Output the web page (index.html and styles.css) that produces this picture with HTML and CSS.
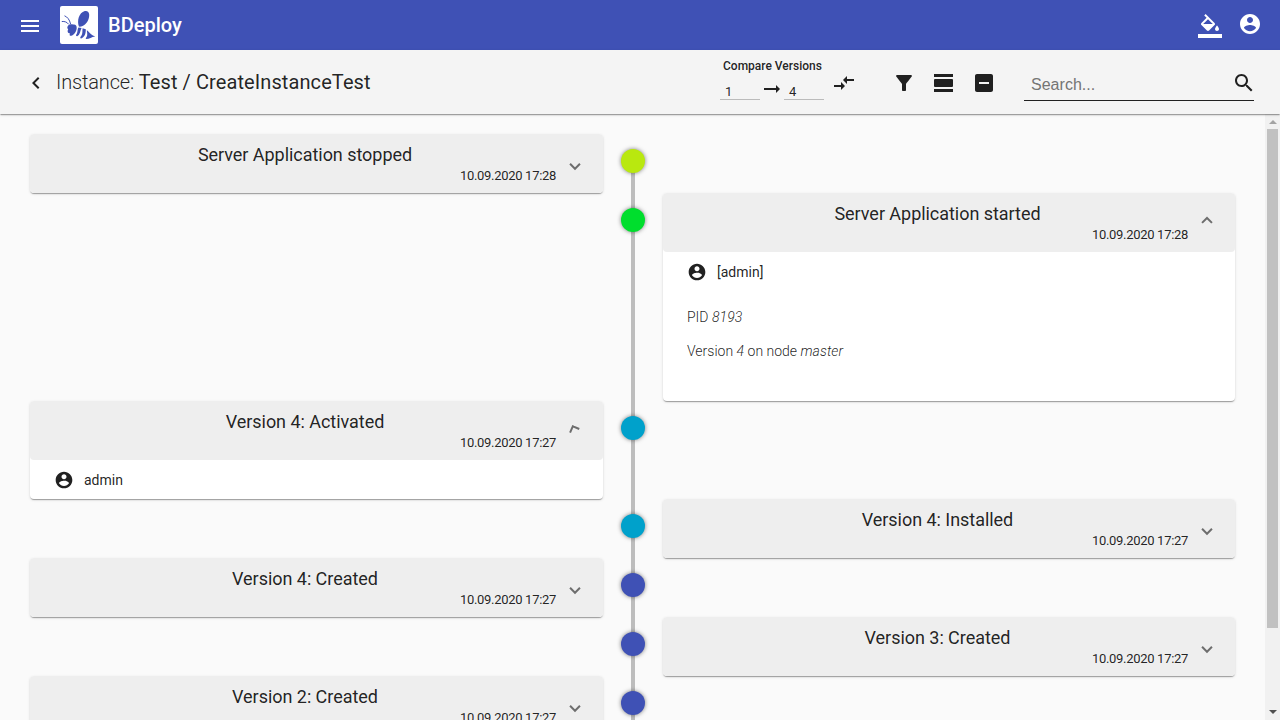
FILE: index.html
```html
<!DOCTYPE html>
<html lang="en">
<head>
<meta charset="utf-8">
<title>BDeploy</title>
<link rel="stylesheet" href="styles.css">
</head>
<body>
<svg class="defs" width="0" height="0">
  <symbol id="account" viewBox="0 0 24 24"><path d="M12 2C6.480 2 2 6.480 2 12s4.480 10 10 10 10-4.480 10-10S17.520 2 12 2zm0 3c1.660 0 3 1.340 3 3s-1.340 3-3 3-3-1.340-3-3 1.340-3 3-3zm0 14.200c-2.500 0-4.710-1.280-6-3.220.030-1.990 4-3.080 6-3.080 1.990 0 5.970 1.090 6 3.080-1.290 1.940-3.500 3.220-6 3.220z"/></symbol>
</svg>
<header class="topbar">
  <svg class="icon menu" viewBox="0 0 24 24"><path d="M3 18h18v-2H3v2zm0-5h18v-2H3v2zm0-7v2h18V6H3z"/></svg>
  <div class="logo">
    <svg viewBox="0 0 38 38">
      <path d="M18.900 20.600C16.800 15 18.800 6.800 24.800 5.100C29.200 4.200 29.900 8.500 28.700 12.500C27.300 17.200 23.500 21 18.900 20.600z"/>
      <path d="M8 19.700C9.200 18.300 11.500 18 13 18.600C15.200 18 17 19.500 16.700 22.300C16.400 25.500 14 29.300 11.200 29.800C9.600 29.900 9.200 28.700 10 27.400C8 27.300 6.900 25.200 8.200 23.400C7.100 22.400 7 20.900 8 19.700z"/>
      <path d="M18.400 21.400L21.600 21.900C20.200 24.300 20.300 28.500 17.200 30.300C15.500 30.200 15.900 28.700 16.900 27.400C17.800 25.500 17.300 23.200 18.400 21.400z"/>
      <path d="M22.600 22.200L25.800 23.200C25.900 26.500 25.200 30.900 21.200 32.400C19.800 32.200 20.100 31.100 21.200 29.900C22.900 27.800 22.200 24.400 22.600 22.200z"/>
      <path d="M26.800 24.300C29 25.700 30.200 28.800 35.200 30.400C31.500 30.800 29.500 33 26.200 33.100C25.200 32.700 26.100 31.800 26.700 30.800C27.800 28.700 27 26.500 26.800 24.300z"/>
      <path class="feeler" d="M10.600 18C9.500 13.500 7.500 11 4.500 9.800M8.700 18.300C6.900 16 4.700 15.200 1.800 15.500"/>
    </svg>
  </div>
  <div class="brand">BDeploy</div>
  <svg class="icon fill" viewBox="0 0 24 24"><path d="M16.560 8.940L7.620 0 6.210 1.410l2.380 2.380-5.150 5.150c-.59.590-.59 1.540 0 2.120l5.500 5.500c.290.290.680.440 1.060.440s.770-.150 1.060-.440l5.500-5.500c.590-.580.590-1.530 0-2.120zM5.210 10L10 5.210 14.790 10H5.210zM19 11.500s-2 2.170-2 3.500c0 1.100.900 2 2 2s2-.900 2-2c0-1.330-2-3.500-2-3.500zM0 20h24v4H0v-4z"/></svg>
  <svg class="icon user"><use href="#account"/></svg>
</header>
<div class="toolbar">
  <svg class="icon back" viewBox="0 0 24 24"><path d="M15.410 7.410L14 6l-6 6 6 6 1.410-1.410L10.830 12z"/></svg>
  <h1 class="title"><span class="light">Instance: </span>Test / CreateInstanceTest</h1>
  <div class="compare">
    <div class="compare-label">Compare Versions</div>
    <div class="compare-row">
      <div class="version">1</div>
      <svg class="arrow" viewBox="0 0 24 24"><path d="M4 11v2h12v3l4-4-4-4v3z"/></svg>
      <div class="version">4</div>
    </div>
  </div>
  <svg class="icon swap" viewBox="0 0 24 24"><path d="M9.010 14H2v2h7.010v3L13 15l-3.990-4v3zm5.980-1v-3H22V8h-7.010V5L11 9l3.990 4z"/></svg>
  <svg class="icon filter" viewBox="0 0 24 24"><path d="M4.250 5.610C6.270 8.200 10 13 10 13v6c0 .550.450 1 1 1h2c.550 0 1-.450 1-1v-6s3.720-4.800 5.740-7.390A.998.998 0 0 0 18.950 4H5.040c-.83 0-1.300.950-.79 1.610z"/></svg>
  <svg class="icon days" viewBox="0 0 24 24"><path d="M2 18h19v3H2zM3 8h17a1 1 0 0 1 1 1v6a1 1 0 0 1-1 1H3a1 1 0 0 1-1-1V9a1 1 0 0 1 1-1zM2 3h19v3H2z"/></svg>
  <svg class="icon minus" viewBox="0 0 24 24"><path d="M19 3H5c-1.100 0-2 .900-2 2v14c0 1.100.900 2 2 2h14c1.100 0 2-.900 2-2V5c0-1.100-.900-2-2-2zm-2 10H7v-2h10v2z"/></svg>
  <div class="search">
    <span class="search-text">Search...</span>
    <svg class="icon" viewBox="0 0 24 24"><path d="M15.500 14h-.79l-.28-.270C15.410 12.590 16 11.110 16 9.500 16 5.910 13.090 3 9.500 3S3 5.910 3 9.500 5.910 16 9.500 16c1.610 0 3.090-.590 4.230-1.570l.270.280v.790l5 4.990L20.490 19l-4.990-5zm-6 0C7.010 14 5 11.990 5 9.500S7.010 5 9.500 5 14 7.010 14 9.500 11.990 14 9.500 14z"/></svg>
  </div>
</div>
<div class="main">
  <main class="timeline">
    <section class="row">
      <article class="card"><div class="head"><div class="head-text"><h2>Server Application stopped</h2><time>10.09.2020 17:28</time></div><i class="chevron"></i></div></article>
      <div class="axis"><span class="dot lime"></span></div>
    </section>
    <section class="row right">
      <div class="axis"><span class="dot green"></span></div>
      <article class="card tall"><div class="head"><div class="head-text"><h2>Server Application started</h2><time>10.09.2020 17:28</time></div><i class="chevron open"></i></div>
        <div class="who"><svg><use href="#account"/></svg>[admin]</div>
        <div class="details"><p>PID <em>8193</em></p><p>Version <em>4</em> on node <em>master</em></p></div>
      </article>
    </section>
    <section class="row">
      <article class="card"><div class="head"><div class="head-text"><h2>Version 4: Activated</h2><time>10.09.2020 17:27</time></div><i class="chevron opening"></i></div>
        <div class="who"><svg><use href="#account"/></svg>admin</div>
      </article>
      <div class="axis"><span class="dot cyan"></span></div>
    </section>
    <section class="row right">
      <div class="axis"><span class="dot cyan"></span></div>
      <article class="card"><div class="head"><div class="head-text"><h2>Version 4: Installed</h2><time>10.09.2020 17:27</time></div><i class="chevron"></i></div></article>
    </section>
    <section class="row">
      <article class="card"><div class="head"><div class="head-text"><h2>Version 4: Created</h2><time>10.09.2020 17:27</time></div><i class="chevron"></i></div></article>
      <div class="axis"><span class="dot indigo"></span></div>
    </section>
    <section class="row right">
      <div class="axis"><span class="dot indigo"></span></div>
      <article class="card"><div class="head"><div class="head-text"><h2>Version 3: Created</h2><time>10.09.2020 17:27</time></div><i class="chevron"></i></div></article>
    </section>
    <section class="row">
      <article class="card"><div class="head"><div class="head-text"><h2>Version 2: Created</h2><time>10.09.2020 17:27</time></div><i class="chevron"></i></div></article>
      <div class="axis"><span class="dot indigo"></span></div>
    </section>
  </main>
  <div class="scrollbar"><i class="up"></i><i class="thumb"></i><i class="down"></i></div>
</div>
</body>
</html>
```

FILE: styles.css
```css
* { box-sizing: border-box; }
body {
  margin: 0;
  height: 720px;
  overflow: hidden;
  display: flex;
  flex-direction: column;
  background: #fafafa;
  color: rgba(0, 0, 0, .87);
  font-family: Roboto, sans-serif;
  font-size: 14px;
}
.defs { position: absolute; }
svg { fill: currentColor; flex: none; }
.icon { width: 24px; height: 24px; }

.topbar {
  flex: none;
  height: 50px;
  display: flex;
  align-items: center;
  padding: 0 18px;
  background: #3f51b5;
  color: #fff;
}
.menu { margin-top: 2px; }
.logo {
  width: 38px;
  height: 38px;
  margin-left: 18px;
  border-radius: 2px;
  background: #fff;
  color: #3f51b5;
}
.logo svg { display: block; width: 38px; height: 38px; }
.feeler { fill: none; stroke: currentColor; stroke-width: 1; }
.brand {
  flex: 1;
  margin-left: 10px;
  font-size: 20px;
  font-weight: 500;
}
.fill { margin-top: 2px; }
.user { margin: -2px 0 0 16px; }

.toolbar {
  flex: none;
  z-index: 1;
  height: 64px;
  display: flex;
  align-items: flex-start;
  padding: 0 26px 0 24px;
  background: #f4f4f4;
  box-shadow: 0 2px 1px -1px rgba(0, 0, 0, .2), 0 1px 1px rgba(0, 0, 0, .14), 0 1px 3px rgba(0, 0, 0, .12);
}
.back { margin-top: 21px; }
.title {
  flex: 1;
  margin: 16px 0 0 8px;
  font-size: 20px;
  line-height: 32px;
  font-weight: 400;
  letter-spacing: .09px;
}
.light { font-weight: 300; letter-spacing: -.16px; }
.compare { width: 104px; padding-top: 9px; }
.compare-label {
  padding-left: 3px;
  font-size: 12px;
  line-height: 14px;
  font-weight: 500;
  white-space: nowrap;
}
.compare-row { display: flex; margin-top: 9px; }
.version {
  width: 40px;
  height: 18px;
  padding-left: 5px;
  font-size: 13px;
  line-height: 20px;
  border-bottom: 1px solid #bbb;
}
.arrow { width: 24px; height: 24px; margin-top: -5px; }
.swap { margin: 21px 0 0 8px; }
.filter, .days, .minus { margin-top: 21px; }
.filter { margin-left: 36px; }
.days, .minus { margin-left: 16px; }
.search {
  display: flex;
  justify-content: space-between;
  width: 230px;
  height: 30px;
  margin: 21px 0 0 28px;
  padding-left: 7px;
  border-bottom: 1px solid #212121;
}
.search .icon { margin: 0 -2px 0 0; }
.search-text {
  color: #757575;
  font-family: "Liberation Sans", Arial, sans-serif;
  font-size: 16px;
  letter-spacing: .02px;
  line-height: 27px;
}

.main { flex: 1; min-height: 0; display: flex; }
.timeline {
  flex: 1;
  padding: 20px 30px 0;
  overflow: hidden;
}
.row { display: grid; grid-template-columns: 573px 60px 572px; }
.right .axis { grid-column: 2; }
.axis {
  display: flex;
  justify-content: center;
  padding-top: 15px;
  background: linear-gradient(#bdbdbd, #bdbdbd) center / 4px 100% no-repeat;
}
.row:first-child .axis { background-position: center 27px; }
.dot {
  width: 24px;
  height: 24px;
  border-radius: 50%;
  box-shadow: 0 0 4px rgba(0, 0, 0, .5);
}
.lime { background: #b9e80f; }
.green { background: #00de2d; }
.cyan { background: #00a1cb; }
.indigo { background: #3f51b5; }

.card {
  min-height: 59px;
  border-radius: 4px;
  background: #fff;
  box-shadow: 0 2px 1px -1px rgba(0, 0, 0, .2), 0 1px 1px rgba(0, 0, 0, .14), 0 1px 3px rgba(0, 0, 0, .12);
}
.tall { height: 208px; }
.head {
  display: flex;
  height: 59px;
  padding: 0 24px;
  border-radius: 4px;
  background: #eee;
}
.head-text { flex: 1; }
.head h2 {
  margin: 10px 0 0;
  font-size: 18px;
  line-height: 22px;
  font-weight: 400;
  letter-spacing: -.04px;
  text-align: center;
}
.head time {
  display: block;
  font-size: 13px;
  line-height: 20px;
  letter-spacing: -.3px;
  text-align: right;
}
.chevron {
  width: 8px;
  height: 8px;
  margin: 26px 0 0 15px;
  border: solid rgba(0, 0, 0, .54);
  border-width: 0 2px 2px 0;
  transform: translateY(.5px) rotate(45deg);
}
.open { transform: translateY(-.8px) rotate(225deg); }
.opening { transform: translate(-.6px, -.8px) rotate(203deg); }
.who {
  display: flex;
  align-items: center;
  gap: 10px;
  height: 39px;
  padding: 1px 24px 0;
}
.who svg { width: 20px; height: 20px; }
.details { padding: 9px 24px; font-weight: 300; }
.details p { margin: 0; line-height: 34px; }
.details em { letter-spacing: .08px; }

.scrollbar {
  width: 15px;
  display: flex;
  flex-direction: column;
  align-items: center;
  background: #f1f1f1;
}
.up, .down { border: 4px solid transparent; }
.up { margin-top: 2px; border-bottom-color: #a3a3a3; }
.thumb { width: 11px; height: 499px; margin-top: 5px; background: #c1c1c1; }
.down { margin: auto 0 2px; border-top-color: #505050; }
```
